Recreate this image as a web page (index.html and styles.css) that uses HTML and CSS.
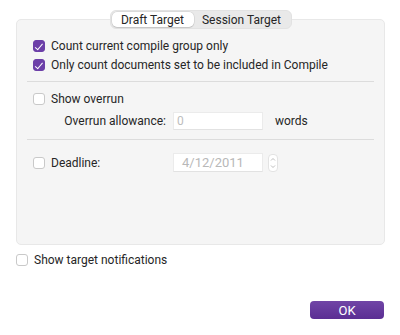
FILE: index.html
```html
<!DOCTYPE html>
<html lang="en">
<head>
    <meta charset="UTF-8">
    <title>Project Targets</title>
    <link rel="stylesheet" href="styles.css">
</head>
<body>
    <div class="dialog">
        <div class="tabs">
            <div class="tab active">Draft Target</div>
            <div class="tab">Session Target</div>
        </div>

        <div class="panel">
            <div class="row first">
                <span class="check on"></span>
                <span>Count current compile group only</span>
            </div>
            <div class="row">
                <span class="check on"></span>
                <span>Only count documents set to be included in Compile</span>
            </div>

            <div class="sep"></div>

            <div class="row">
                <span class="check"></span>
                <span>Show overrun</span>
            </div>
            <div class="field-row overrun">
                <span class="field-label right">Overrun allowance:</span>
                <div class="input">0</div>
                <span class="unit">words</span>
            </div>

            <div class="sep"></div>

            <div class="field-row deadline">
                <span class="check"></span>
                <span class="field-label">Deadline:</span>
                <div class="input date">4/12/2011</div>
                <div class="stepper">
                    <svg width="10" height="18" viewBox="0 0 10 18">
                        <path d="M3 6.5 L5 4.5 L7 6.5" fill="none" stroke="#b5b5b5" stroke-width="0.9"/>
                        <path d="M3 11.5 L5 13.5 L7 11.5" fill="none" stroke="#b5b5b5" stroke-width="0.9"/>
                    </svg>
                </div>
            </div>
        </div>

        <div class="row notify">
            <span class="check"></span>
            <span>Show target notifications</span>
        </div>

        <div class="actions">
            <button class="ok">OK</button>
        </div>
    </div>
</body>
</html>
```
FILE: styles.css
```css
* {
    margin: 0;
    padding: 0;
    box-sizing: border-box;
}

body {
    background: #ffffff;
    font-family: "Roboto", "Liberation Sans", sans-serif;
    font-size: 12px;
    color: #262626;
}

.dialog {
    width: 400px;
    height: 335px;
    display: flex;
    flex-direction: column;
    padding: 10px 15px 16px 16px;
}

/* segmented control over the panel edge */
.tabs {
    align-self: center;
    display: flex;
    width: 182px;
    height: 19px;
    padding: 1px;
    background: #e9e9e9;
    border: 1px solid #e2e2e2;
    border-radius: 6px;
    margin-bottom: -10px;
    position: relative;
    z-index: 1;
    white-space: nowrap;
}

.tab {
    display: flex;
    align-items: center;
    justify-content: center;
    border-radius: 5px;
    line-height: 1;
    flex: 1;
}

.tab.active {
    background: #ffffff;
    box-shadow: 0 0 0 0.5px rgba(0, 0, 0, 0.12), 0 1px 1px rgba(0, 0, 0, 0.1);
    flex: none;
    width: 82px;
}

.panel {
    height: 226px;
    background: #f5f5f5;
    border: 1px solid #e8e8e8;
    border-radius: 5px;
    padding: 17px 10px 0 10px;
    display: flex;
    flex-direction: column;
}

.row {
    display: flex;
    align-items: center;
    gap: 6px;
    height: 18px;
    padding-left: 6px;
    margin-bottom: 1px;
}

.sep {
    height: 1px;
    background: #dcdcdc;
    margin: 6px 0 8px 0;
    flex: none;
}

.check {
    width: 12px;
    height: 12px;
    border-radius: 3px;
    background: #ffffff;
    border: 1px solid #c9c9c9;
    flex: none;
    position: relative;
}

.check.on {
    background: #6c3fa8;
    border-color: #6c3fa8;
}

.check.on::after {
    content: "";
    position: absolute;
    left: 3px;
    top: 0.5px;
    width: 3px;
    height: 6.5px;
    border: solid #ffffff;
    border-width: 0 1.6px 1.6px 0;
    transform: rotate(40deg);
}

.field-row {
    display: flex;
    align-items: center;
    height: 18px;
    flex: none;
}

.overrun {
    margin-top: 3px;
    margin-bottom: 3px;
    padding-left: 24px;
}

.deadline {
    margin-top: 5px;
    height: 19px;
    padding-left: 6px;
}

.field-label {
    width: 115px;
    margin-right: 7px;
}

.field-label.right {
    text-align: right;
}

.deadline .check {
    margin-right: 6px;
}

.input {
    width: 90px;
    height: 100%;
    background: #ffffff;
    border: 1px solid #ebebeb;
    border-bottom-color: #e2e2e2;
    color: #bdbdbd;
    padding: 0 3px;
    display: flex;
    align-items: center;
}

.input.date {
    padding-left: 8px;
    font-size: 13px;
    color: #b8b8b8;
}

.unit {
    margin-left: 12px;
}

.stepper {
    margin-left: 5px;
    width: 10px;
    height: 18px;
    border: 1px solid #e3e3e3;
    border-radius: 4px;
    background: #ffffff;
    display: flex;
}

.stepper svg {
    margin: -1px;
}

.notify {
    padding-left: 0;
    margin-top: 6px;
}

.actions {
    margin-top: auto;
    display: flex;
    justify-content: flex-end;
}

.ok {
    width: 74px;
    height: 18px;
    border: none;
    border-radius: 4px;
    background: linear-gradient(#7045a6, #5b2e93);
    color: #ffffff;
    font-family: "Roboto", "Liberation Sans", sans-serif;
    font-size: 13px;
    margin-right: 1px;
}
```
